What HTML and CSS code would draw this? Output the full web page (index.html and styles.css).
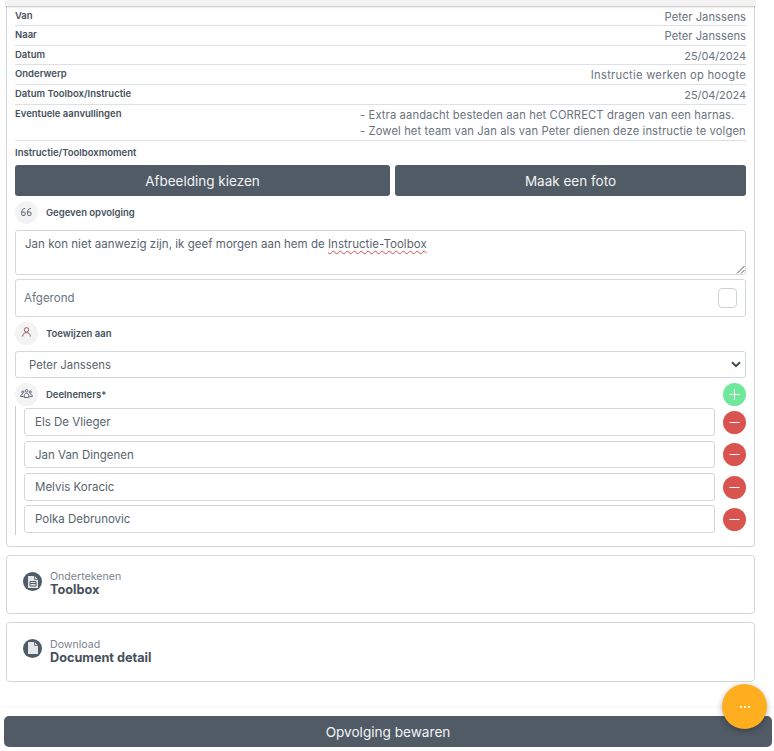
FILE: index.html
```html
<!DOCTYPE html>
<html lang="nl">
<head>
<meta charset="utf-8">
<title>Opvolging</title>
<link rel="stylesheet" href="styles.css">
</head>
<body>
<main class="page">
  <section class="card main-card">
    <div class="card-head"></div>
    <div class="card-body">
      <div class="row r1"><span class="key">Van</span><span class="val name">Peter Janssens</span></div>
      <div class="row r2"><span class="key">Naar</span><span class="val name">Peter Janssens</span></div>
      <div class="row r3"><span class="key">Datum</span><span class="val date">25/04/2024</span></div>
      <div class="row r2"><span class="key">Onderwerp</span><span class="val">Instructie werken op hoogte</span></div>
      <div class="row r2"><span class="key">Datum Toolbox/Instructie</span><span class="val date">25/04/2024</span></div>
      <div class="row notes"><span class="key">Eventuele aanvullingen</span>
        <div class="note-lines"><div>- Extra aandacht besteden aan het CORRECT dragen van een harnas.</div><div>- Zowel het team van Jan als van Peter dienen deze instructie te volgen</div></div>
      </div>
      <div class="key section-label">Instructie/Toolboxmoment</div>
      <div class="btn-row"><button class="btn btn-a">Afbeelding kiezen</button><button class="btn btn-b">Maak een foto</button></div>

      <div class="icon-head">
        <span class="round"><svg class="up1" width="11" height="8" viewBox="0 0 11 8" fill="none" stroke="#59636e" stroke-width="1"><path d="M4.200 .5C2 .5 .8 1.800 .8 3.800V6.500c0 .6 .4 1 1 1h1.400c.6 0 1-.4 1-1V5c0-.6-.4-1-1-1H.8"/><path d="M10 .5C7.800 .5 6.600 1.800 6.600 3.800V6.500c0 .6 .4 1 1 1H9c.6 0 1-.4 1-1V5c0-.6-.4-1-1-1H6.600"/></svg></span>
        <span class="key">Gegeven opvolging</span>
      </div>
      <div class="textarea">Jan kon niet aanwezig zijn, ik geef morgen aan hem de <span class="spell">Instructie-Toolbox</span>
        <svg class="grip" width="10" height="10" viewBox="0 0 10 10" stroke="#555" stroke-width="1"><path d="M2 9.500 9.500 2M6 9.500 9.500 6"/></svg>
      </div>
      <div class="check-box"><span>Afgerond</span><span class="check"></span></div>

      <div class="icon-head h2">
        <span class="round"><svg class="up3" width="9" height="10" viewBox="0 0 9 10" fill="none" stroke="#9a5f5e" stroke-width="1"><circle cx="4.500" cy="2.800" r="2.200"/><path d="M.7 9.500C.7 7 2.200 5.600 4.500 5.600S8.300 7 8.300 9.500"/></svg></span>
        <span class="key">Toewijzen aan</span>
      </div>
      <div class="select"><span>Peter Janssens</span><svg width="10" height="7" viewBox="0 0 10 7" fill="none" stroke="#3f4a54" stroke-width="2"><path d="M1 1.200 5 5.200 9 1.200"/></svg></div>

      <div class="icon-head h3">
        <span class="round"><svg class="up1" width="13" height="9" viewBox="0 0 13 9" fill="none" stroke="#5d6873" stroke-width="1"><circle cx="6.500" cy="1.800" r="1.300"/><circle cx="2.800" cy="3" r="1.100"/><circle cx="10.200" cy="3" r="1.100"/><path d="M4.300 8.500V6.500c0-1.300 1-2.200 2.200-2.200s2.200 .9 2.200 2.200v2zM.6 7.500c0-1.400 .8-2.300 2.200-2.400M12.400 7.500c0-1.400-.8-2.300-2.200-2.400M.6 7.500h3M9.400 7.500h3"/></svg></span>
        <span class="key">Deelnemers*</span>
        <span class="circle add"><svg width="13" height="13" viewBox="0 0 13 13" stroke="#fff" stroke-width="1"><path d="M6.500 1v11M1 6.500h11"/></svg></span>
      </div>
      <div class="people">
        <div class="person p1"><div class="input">Els De Vlieger</div><span class="circle del"><svg width="11" height="3" viewBox="0 0 11 3" stroke="#fff" stroke-width="1"><path d="M.500 1.500h10"/></svg></span></div>
        <div class="person p2"><div class="input">Jan Van Dingenen</div><span class="circle del"><svg width="11" height="3" viewBox="0 0 11 3" stroke="#fff" stroke-width="1"><path d="M.500 1.500h10"/></svg></span></div>
        <div class="person p3"><div class="input">Melvis Koracic</div><span class="circle del"><svg width="11" height="3" viewBox="0 0 11 3" stroke="#fff" stroke-width="1"><path d="M.500 1.500h10"/></svg></span></div>
        <div class="person p4"><div class="input">Polka Debrunovic</div><span class="circle del"><svg width="11" height="3" viewBox="0 0 11 3" stroke="#fff" stroke-width="1"><path d="M.500 1.500h10"/></svg></span></div>
      </div>
    </div>
  </section>

  <section class="card link-card c2">
    <span class="doc"><svg width="10" height="12" viewBox="0 0 10 12"><path d="M0 0h6.500L10 3.500V12H0z" fill="#e4e7ea"/><path d="M6.500 0v3.500H10" fill="none" stroke="#4f5b67" stroke-width=".8"/><path d="M2 5.500h6v4.500H2z" fill="none" stroke="#4f5b67" stroke-width="1"/><path d="M2 7.500h6" stroke="#4f5b67" stroke-width="1"/></svg></span>
    <div class="link-text"><div class="link-sub">Ondertekenen</div><div class="link-title">Toolbox</div></div>
  </section>
  <section class="card link-card c3">
    <span class="doc"><svg width="10" height="12" viewBox="0 0 10 12"><path d="M0 0h6.500L10 3.500V12H0z" fill="#e4e7ea"/><path d="M6.500 0v3.500H10" fill="none" stroke="#4f5b67" stroke-width=".8"/></svg></span>
    <div class="link-text"><div class="link-sub">Download</div><div class="link-title">Document detail</div></div>
  </section>

  <footer class="footer"><button class="save">Opvolging bewaren</button></footer>
</main>
<button class="fab" aria-label="Meer"><span></span><span></span><span></span></button>
</body>
</html>
```
FILE: styles.css
```css
* { box-sizing: border-box; }
html, body { margin: 0; height: 751px; overflow: hidden; background: #fff; }
body { font-family: Inter, "Open Sans", sans-serif; color: #59636e; position: relative; }
.page { display: flex; flex-direction: column; padding: 0 2px 0 4px; }
.card { border: 1px solid #d3d8dc; border-radius: 4px; background: #fff; margin: 0 17px 0 2px; }
.main-card { height: 547px; border-top: 0; }
.card-head { height: 6px; margin: 0 -1px 1px; background: #f3f3f3; box-shadow: 0 1px 2px rgba(0,0,0,.25); }
.card-body { padding: 0 8px; }
.row { display: flex; justify-content: space-between; border-bottom: 1px solid #dde1e5; align-items: flex-start; }
.r1 { height: 19px; padding-top: 3px; }
.r2 { height: 20px; padding-top: 3px; }
.r3 { height: 19px; padding-top: 3px; }
.key { font-size: 9.500px; font-weight: 600; color: #46515c; line-height: 12px; white-space: nowrap; }
.val { font-size: 11.200px; letter-spacing: .26px; color: #6a747e; line-height: 15px; white-space: nowrap; }
.name { letter-spacing: .02px; }
.date { font-size: 11px; letter-spacing: -.1px; }
.notes { height: 36px; padding-top: 3px; }
.note-lines { font-size: 11.200px; letter-spacing: .12px; color: #6a747e; line-height: 16px; width: 386px; white-space: nowrap; margin-top: -1px; }
.section-label { margin-top: 6px; height: 12px; display: block; }
.btn-row { display: flex; gap: 5px; margin-top: 6px; }
.btn { height: 31px; border: 0; border-radius: 3px; background: #505b66; color: #f2f4f5; font: 400 13.500px Inter, sans-serif; padding: 0; }
.btn-a { width: 375px; }
.btn-b { flex: 1; }
.icon-head { display: flex; align-items: center; gap: 8px; height: 23px; margin-top: 5px; }
.round { width: 23px; height: 23px; border-radius: 50%; background: #f3f3f3; display: flex; align-items: center; justify-content: center; flex: none; }
.up1 { margin-bottom: 2px; }
.up3 { margin-bottom: 4px; }
.textarea { position: relative; height: 45px; margin-top: 6px; border: 1px solid #d3d8dc; border-radius: 3px; font-size: 11.500px; letter-spacing: .03px; padding: 6px 9px; line-height: 15px; color: #59636e; }
.spell { text-decoration: underline wavy #d9534f 1px; text-underline-offset: 2px; }
.grip { position: absolute; right: 0; bottom: 0; }
.check-box { display: flex; justify-content: space-between; align-items: center; height: 38px; margin-top: 4px; border: 1px solid #d3d8dc; border-radius: 3px; padding: 0 8px; font-size: 11.500px; color: #6a747e; }
.check { width: 19px; height: 20px; border: 1px solid #ccd1d6; border-radius: 4px; }
.h2 { margin-top: 5px; }
.select { display: flex; justify-content: space-between; align-items: center; height: 27px; margin-top: 6px; border: 1px solid #d3d8dc; border-radius: 3px; padding: 0 4px 0 13px; font-size: 11.300px; color: #59636e; }
.h3 { margin-top: 5px; }
.h3 .key { flex: 1; }
.circle { width: 23px; height: 23px; border-radius: 50%; display: flex; align-items: center; justify-content: center; flex: none; }
.add { background: #6ee89b; }
.del { background: #d9534f; }
.people { border-left: 1px solid #c9ced3; padding-left: 8px; height: 129px; display: flex; flex-direction: column; }
.person { display: flex; align-items: center; justify-content: space-between; gap: 8px; }
.p1 { margin-top: 2px; height: 28px; }
.p2 { margin-top: 5px; height: 27px; }
.p3 { margin-top: 5px; height: 28px; }
.p4 { margin-top: 4px; height: 28px; }
.input { flex: 1; height: 100%; border: 1px solid #d3d8dc; border-radius: 3px; padding: 0 10px; font-size: 11.500px; display: flex; align-items: center; color: #59636e; }
.link-card { display: flex; align-items: center; gap: 8px; padding-left: 16px; }
.c2 { height: 59px; margin-top: 8px; }
.c3 { height: 60px; margin-top: 8px; }
.doc { width: 19px; height: 19px; border-radius: 50%; background: #4f5b67; display: flex; align-items: center; justify-content: center; flex: none; margin-bottom: 6px; }
.c3 .doc { margin-bottom: 8px; }
.link-text { margin-bottom: 2px; }
.link-sub { font-size: 10.600px; line-height: 12px; color: #7a848d; }
.link-title { font-size: 12.700px; font-weight: 700; line-height: 13px; color: #46515c; }
.footer { margin-top: 26px; padding-top: 8px; margin-left: -4px; margin-right: -2px; padding-left: 4px; padding-right: 2px; background: #fff; box-shadow: 0 -2px 3px rgba(0,0,0,.02); }
.save { display: block; width: 100%; height: 31px; border: 0; border-radius: 5px; background: #505b66; color: #f2f4f5; font: 400 13.600px Inter, sans-serif; }
.fab { position: absolute; left: 722px; top: 684px; width: 45px; height: 45px; border: 0; border-radius: 50%; background: #ffae1f; box-shadow: 0 2px 6px rgba(0,0,0,.3); display: flex; gap: 2px; align-items: center; justify-content: center; padding: 0; }
.fab span { width: 2px; height: 2px; background: #fff; opacity: .85; }
```
